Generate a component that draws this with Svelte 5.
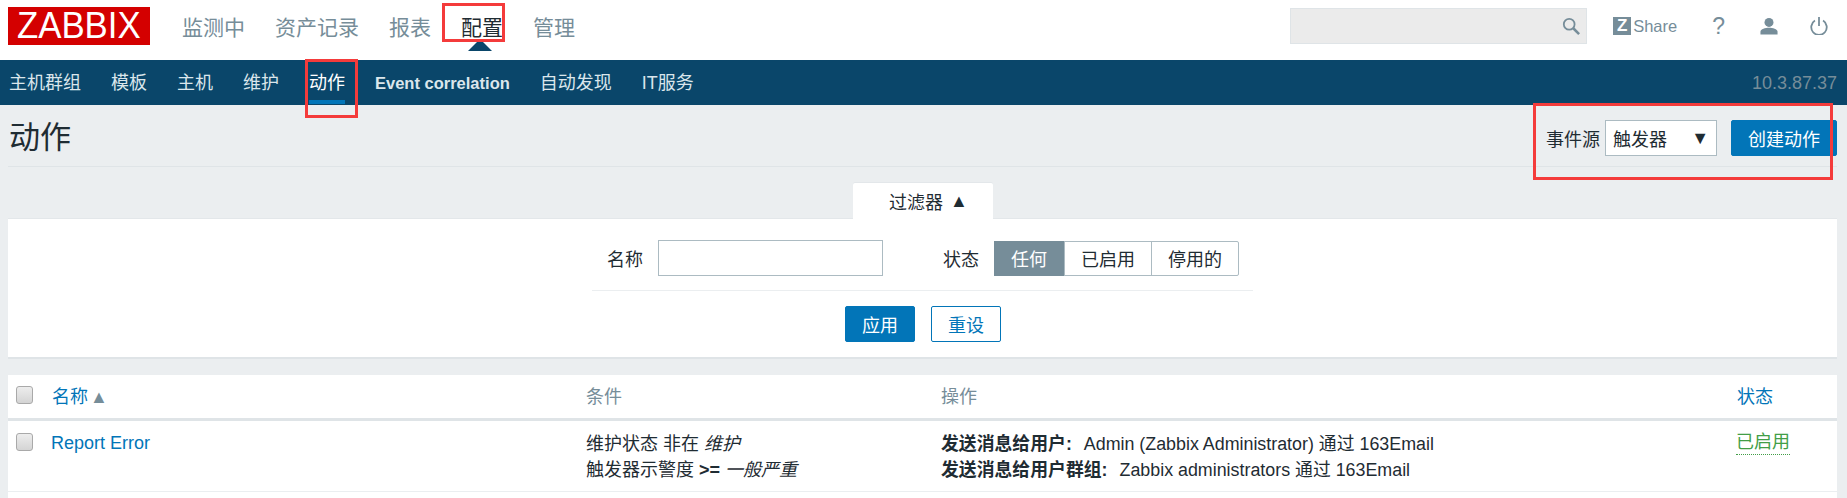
<script>
  const mainNav = ['监测中', '资产记录', '报表', '配置', '管理']
  const subNav = ['主机群组', '模板', '主机', '维护', '动作', 'Event correlation', '自动发现', 'IT服务']
  const states = ['任何', '已启用', '停用的']
</script>

<div class="page">
  <header class="top">
    <div class="logo"><span>ZABBIX</span></div>
    <nav class="main-nav">
      {#each mainNav as item}
        <span class="main-item" class:active={item === '配置'}>{item}</span>
      {/each}
    </nav>
    <div class="tools">
      <div class="search">
        <svg width="18" height="18" viewBox="0 0 20 20" fill="none" stroke="#768d99">
          <circle cx="8" cy="8" r="6" stroke-width="2" />
          <path d="M12.5 12.5 L19 19" stroke-width="2.8" />
        </svg>
      </div>
      <div class="share">
        <span class="z-badge">Z</span><span>Share</span>
      </div>
      <span class="help">?</span>
      <svg class="user" width="18" height="18" viewBox="0 0 20 20" fill="#768d99">
        <circle cx="10" cy="6" r="5" />
        <path d="M0.5 19.5 V16.5 C0.5 13.5 6 12 10 12 C14 12 19.5 13.5 19.5 16.5 V19.5 Z" />
      </svg>
      <svg class="power" width="18" height="18" viewBox="0 0 20 20" fill="none" stroke="#768d99" stroke-width="2">
        <path d="M5.5 4 A8.6 8.6 0 1 0 14.5 4" />
        <path d="M10 0 V10" />
      </svg>
    </div>
  </header>

  <nav class="sub-nav">
    {#each subNav as item}
      <span class="sub-item" class:latin={item === 'Event correlation'} class:active={item === '动作'}>{item}</span>
    {/each}
    <span class="version">10.3.87.37</span>
  </nav>

  <main class="content">
    <div class="title-row">
      <h1>动作</h1>
      <div class="controls">
        <span class="label">事件源</span>
        <div class="select"><span>触发器</span><span class="arrow">▼</span></div>
        <button class="btn create">创建动作</button>
      </div>
    </div>

    <div class="filter-tab"><span>过滤器</span><span class="tab-arrow">▲</span></div>
    <section class="filter">
      <div class="filter-row">
        <label class="label" for="name-filter">名称</label>
        <input id="name-filter" class="name-input" type="text" />
        <span class="label status-label">状态</span>
        <div class="segments">
          {#each states as s, i}
            <span class="segment" class:on={i === 0}>{s}</span>
          {/each}
        </div>
      </div>
      <div class="filter-actions">
        <button class="btn apply">应用</button>
        <button class="btn reset">重设</button>
      </div>
    </section>

    <section class="table">
      <div class="row head">
        <span class="check"></span>
        <span class="blue">名称<span class="sort">▲</span></span>
        <span class="muted">条件</span>
        <span class="muted">操作</span>
        <span class="blue">状态</span>
      </div>
      <div class="row body">
        <span class="check"></span>
        <span class="link">Report Error</span>
        <div class="lines">
          <div>维护状态 非在 <em>维护</em></div>
          <div>触发器示警度 <b>&gt;=</b> <em>一般严重</em></div>
        </div>
        <div class="lines ops">
          <div><b>发送消息给用户:</b> Admin (Zabbix Administrator) 通过 163Email</div>
          <div><b>发送消息给用户群组:</b> Zabbix administrators 通过 163Email</div>
        </div>
        <span class="enabled">已启用</span>
      </div>
    </section>
  </main>

  <div class="mark mark-config"></div>
  <div class="mark mark-action"></div>
  <div class="mark mark-create"></div>
</div>

<style>
  :global(body) {
    margin: 0;
    background: #ebeef0;
    font-family: "Liberation Sans", "Noto Sans CJK SC", sans-serif;
    font-size: 17px;
    color: #1f2c33;
    overflow: hidden;
  }

  .page {
    position: relative;
    height: 498px;
    overflow: hidden;
  }

  .top {
    display: flex;
    align-items: center;
    height: 60px;
    background: #fff;
    padding: 0 19px 8px 8px;
    box-sizing: border-box;
  }

  .logo {
    width: 142px;
    height: 38px;
    background: #d40000;
    color: #fff;
    font-size: 37px;
    line-height: 38px;
    text-align: center;
  }

  .logo span {
    display: inline-block;
    transform: scaleX(0.94);
  }

  .main-nav {
    display: flex;
    gap: 30px;
    margin-left: 32px;
    font-size: 21px;
    color: #768d99;
  }

  .main-item {
    position: relative;
  }

  .main-item.active {
    color: #1f2c33;
  }

  /* little notch above the active section */
  .main-item.active::after {
    content: '';
    position: absolute;
    left: 50%;
    top: 28px;
    margin-left: -14px;
    border: 12px solid transparent;
    border-top: 0;
    border-bottom-color: #0a466a;
  }

  .tools {
    display: flex;
    align-items: center;
    margin-left: auto;
  }

  .search {
    display: flex;
    align-items: center;
    justify-content: flex-end;
    width: 297px;
    height: 36px;
    box-sizing: border-box;
    padding-right: 6px;
    background: #ebebeb;
    border: 1px solid #dfe4e7;
  }

  .share {
    display: flex;
    align-items: center;
    gap: 2px;
    margin-left: 26px;
    color: #768d99;
    font-size: 16.5px;
  }

  .z-badge {
    width: 18px;
    height: 18px;
    background: #768d99;
    color: #fff;
    font-weight: bold;
    font-size: 17px;
    line-height: 18px;
    text-align: center;
  }

  .help {
    margin-left: 35px;
    color: #768d99;
    font-size: 23px;
  }

  .user {
    margin-left: 35px;
  }

  .power {
    margin-left: 32px;
  }

  .sub-nav {
    display: flex;
    align-items: flex-start;
    gap: 30px;
    height: 45px;
    padding: 0 10px 0 9px;
    box-sizing: border-box;
    background: #0a466a;
    color: #dbe6ec;
    font-size: 18px;
  }

  .sub-item {
    height: 45px;
    line-height: 46px;
    box-sizing: border-box;
  }

  .sub-item.active {
    color: #fff;
    border-bottom: 4px solid #0275b8;
    height: 44px;
  }

  .sub-item.latin {
    font-weight: bold;
    font-size: 16.5px;
  }

  .version {
    margin-left: auto;
    line-height: 46px;
    color: #768d99;
  }

  .content {
    padding: 0 10px 0 8px;
  }

  .title-row {
    display: flex;
    align-items: center;
    justify-content: space-between;
    height: 62px;
    box-sizing: border-box;
    border-bottom: 1px solid #dfe4e7;
    padding: 5px 0 0 1px;
  }

  h1 {
    margin: 0 0 8px;
    font-size: 31px;
    font-weight: normal;
  }

  .controls {
    display: flex;
    align-items: center;
  }

  .label {
    font-size: 18px;
  }

  .select {
    display: flex;
    align-items: center;
    justify-content: space-between;
    width: 112px;
    height: 36px;
    margin-left: 5px;
    padding: 0 7px;
    box-sizing: border-box;
    background: #fff;
    border: 1px solid #acbbc2;
    font-size: 18px;
  }

  .arrow {
    font-size: 18px;
    line-height: 18px;
  }

  .btn {
    height: 36px;
    border-radius: 2px;
    border: 1px solid #0275b8;
    font-family: inherit;
    font-size: 18px;
    padding: 0;
  }

  .create {
    width: 106px;
    margin-left: 14px;
    background: #0275b8;
    color: #fff;
  }

  .filter-tab {
    position: relative;
    display: flex;
    align-items: center;
    gap: 7px;
    width: 140px;
    height: 36px;
    margin: 16px 0 -1px 845px;
    padding-left: 36px;
    box-sizing: border-box;
    background: #fff;
    box-shadow: 0 -1px 0 #e3e7ea;
    border-radius: 2px 2px 0 0;
    font-size: 18px;
  }

  .tab-arrow {
    font-size: 18px;
    line-height: 18px;
  }

  .filter {
    height: 141px;
    box-sizing: border-box;
    background: #fff;
    border-top: 1px solid #e3e7ea;
    border-bottom: 2px solid #dfe4e7;
    padding-top: 21px;
  }

  .filter-row {
    display: flex;
    align-items: center;
    width: 661px;
    height: 51px;
    margin-left: 584px;
    padding: 0 0 14px 15px;
    box-sizing: border-box;
    border-bottom: 1px solid #ebeef0;
  }

  .name-input {
    width: 225px;
    height: 36px;
    margin-left: 15px;
    box-sizing: border-box;
    border: 1px solid #acbbc2;
    background: #fff;
    padding: 0;
  }

  .status-label {
    margin-left: 60px;
  }

  .segments {
    display: flex;
    height: 35px;
    margin-left: 15px;
    border: 1px solid #acbbc2;
    box-sizing: border-box;
    border-radius: 2px;
    font-size: 18px;
  }

  .segment {
    display: flex;
    align-items: center;
    justify-content: center;
    width: 87px;
    border-left: 1px solid #acbbc2;
    box-sizing: border-box;
  }

  .segment:first-child {
    width: 70px;
    border-left: 0;
  }

  .segment.on {
    background: #768d99;
    color: #fff;
    margin: -1px 0 -1px -1px;
  }

  .filter-actions {
    display: flex;
    justify-content: flex-start;
    gap: 16px;
    margin: 15px 0 0 837px;
  }

  .apply,
  .reset {
    width: 70px;
  }

  .apply {
    background: #0275b8;
    color: #fff;
  }

  .reset {
    background: #fff;
    color: #0275b8;
  }

  .table {
    margin-top: 16px;
    height: 130px;
    background: #fff;
  }

  .row {
    display: grid;
    grid-template-columns: 44px 534px 355px 796px 1fr;
    font-size: 18px;
  }

  .row.head {
    height: 46px;
    box-sizing: border-box;
    align-items: center;
    padding-bottom: 3px;
    border-bottom: 3px solid #dfe4e7;
  }

  .row.body {
    height: 71px;
    box-sizing: border-box;
    padding-top: 10px;
    border-bottom: 1px solid #ebeef0;
  }

  .check {
    width: 17px;
    height: 18px;
    margin-left: 8px;
    box-sizing: border-box;
    border: 1px solid #a9a9a9;
    border-radius: 3px;
    background: linear-gradient(#ededed, #d4d4d4);
  }

  .row.body .check {
    margin-top: 2px;
  }

  .blue {
    color: #0275b8;
  }

  .muted {
    color: #768d99;
  }

  .sort {
    margin-left: 2px;
    color: #768d99;
    font-size: 18px;
    line-height: 18px;
  }

  .link {
    color: #0275b8;
    line-height: 24px;
    margin-left: -1px;
  }

  .lines {
    line-height: 26px;
  }

  .lines em {
    font-style: italic;
  }

  .ops {
    font-size: 17.85px;
  }

  .ops b {
    margin-right: 7px;
  }

  .enabled {
    align-self: start;
    justify-self: start;
    color: #429e47;
    line-height: 23px;
    border-bottom: 1px dotted #429e47;
    margin-left: -1px;
  }

  /* red annotation boxes drawn over the screenshot */
  .mark {
    position: absolute;
    border: 3px solid #f43b3b;
    box-sizing: border-box;
  }

  .mark-config {
    left: 442px;
    top: 3px;
    width: 63px;
    height: 39px;
  }

  .mark-action {
    left: 305px;
    top: 59px;
    width: 53px;
    height: 59px;
  }

  .mark-create {
    left: 1533px;
    top: 103px;
    width: 300px;
    height: 77px;
  }
</style>
